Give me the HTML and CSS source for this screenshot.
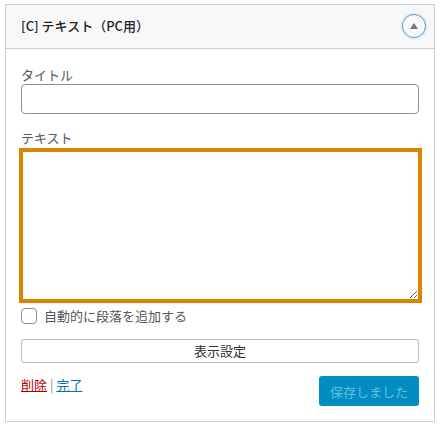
FILE: index.html
```html
<!DOCTYPE html>
<html lang="ja">
<head>
    <meta charset="UTF-8">
    <title>テキスト（PC用）</title>
    <link rel="stylesheet" href="styles.css">
</head>
<body>
    <div class="widget">
        <!-- Header -->
        <div class="widget-top">
            <h3>[C] テキスト（PC用）</h3>
            <button type="button" class="toggle" aria-label="閉じる">
                <span class="arrow"></span>
            </button>
        </div>

        <!-- Form -->
        <form class="widget-inside">
            <div class="form-group title-group">
                <label for="title">タイトル</label>
                <input type="text" id="title">
            </div>

            <div class="form-group text-group">
                <label for="text">テキスト</label>
                <textarea id="text"></textarea>
            </div>

            <div class="checkbox-group">
                <input type="checkbox" id="autop">
                <label for="autop">自動的に段落を追加する</label>
            </div>

            <button type="button" class="display-settings">表示設定</button>

            <div class="form-footer">
                <p><a href="#" class="delete">削除</a> <span class="sep">|</span> <a href="#" class="done">完了</a></p>
                <button type="button" class="save" disabled>保存しました</button>
            </div>
        </form>
    </div>
</body>
</html>
```

FILE: styles.css
```css
:root {
    --border-color: #ccd0d4;
    --text-color: #2c3338;
    --label-color: #50575e;
    --input-border: #8c8f94;
    --highlight: #d98500;
}

* {
    margin: 0;
    padding: 0;
    box-sizing: border-box;
    font-family: "Noto Sans CJK JP", "Noto Sans", sans-serif;
}

body {
    background-color: white;
    padding: 4px 5px 3px;
}

.widget {
    width: 430px;
    height: 418px;
    border: 1px solid var(--border-color);
    background-color: white;
}

.widget-top {
    height: 44px;
    display: flex;
    align-items: center;
    justify-content: space-between;
    padding: 0 8px 2px 15px;
    background-color: #f8f8f8;
    border-bottom: 1px solid var(--border-color);
}

.widget-top h3 {
    font-size: 13px;
    font-weight: 500;
    color: #1d2327;
}

.toggle {
    width: 24px;
    height: 24px;
    display: flex;
    align-items: center;
    justify-content: center;
    border: 1px solid #5b9dd9;
    border-radius: 50%;
    background: none;
    box-shadow: 0 0 2px rgba(30,140,190,.5);
}

.arrow {
    width: 0;
    height: 0;
    border-left: 4px solid transparent;
    border-right: 4px solid transparent;
    border-bottom: 6px solid #72777c;
}

.widget-inside {
    padding: 0 15px;
}

.form-group label {
    display: block;
    font-size: 13px;
    line-height: 18px;
    color: var(--label-color);
}

.title-group {
    padding-top: 17px;
}

.title-group input {
    display: block;
    width: 398px;
    height: 30px;
    border: 1px solid var(--input-border);
    border-radius: 4px;
    background-color: white;
}

.text-group {
    margin-top: 15px;
}

.text-group label {
    margin-bottom: 1px;
}

.text-group textarea {
    display: block;
    width: 403px;
    height: 155px;
    margin-left: -2px;
    border: 4px solid var(--highlight);
    background-color: white;
    outline: none;
}

.checkbox-group {
    display: flex;
    align-items: center;
    gap: 7px;
    margin-top: 5px;
}

.checkbox-group input {
    appearance: none;
    width: 16px;
    height: 16px;
    border: 1px solid var(--input-border);
    border-radius: 4px;
    background-color: white;
}

.checkbox-group label {
    font-size: 13px;
    line-height: 16px;
    color: var(--label-color);
}

.display-settings {
    display: block;
    width: 398px;
    height: 24px;
    margin-top: 15px;
    padding-bottom: 2px;
    border: 1px solid #bbb;
    border-radius: 3px;
    background-color: white;
    font-size: 13px;
    color: var(--text-color);
}

.form-footer {
    display: flex;
    justify-content: space-between;
    align-items: flex-start;
    margin-top: 13px;
}

.form-footer p {
    font-size: 13px;
    line-height: 18px;
    color: #8c8f94;
}

.delete {
    color: #a00;
}

.done {
    color: #0073aa;
}

.save {
    width: 100px;
    height: 30px;
    border: none;
    border-radius: 3px;
    background-color: #008ec2;
    font-size: 13px;
    color: #66bbdd;
}
```
